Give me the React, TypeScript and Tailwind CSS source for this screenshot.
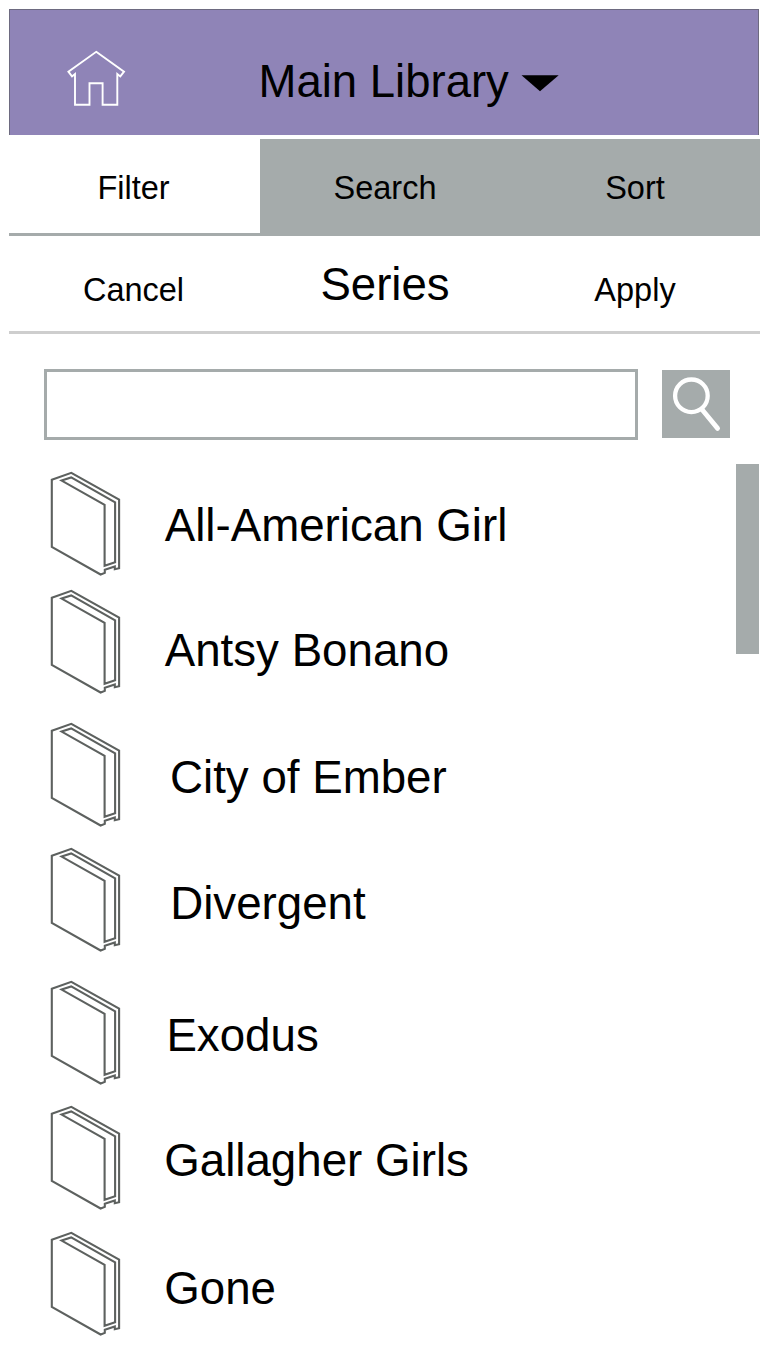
const series = [
  { name: "All-American Girl", row: "h-[118px]", label: "pt-[32px] pl-[43.7px]" },
  { name: "Antsy Bonano", row: "h-[133px]", label: "pt-[39px] pl-[43.7px]" },
  { name: "City of Ember", row: "h-[125.4px]", label: "pt-[33px] pl-[49px]" },
  { name: "Divergent", row: "h-[132.6px]", label: "pt-[33.6px] pl-[49.2px]" },
  { name: "Exodus", row: "h-[125.2px]", label: "pt-[33px] pl-[45.4px]" },
  { name: "Gallagher Girls", row: "h-[125.4px]", label: "pt-[32.8px] pl-[43.2px]" },
  { name: "Gone", row: "h-[110px]", label: "pt-[35.4px] pl-[43.2px]" },
];

function HomeIcon() {
  return (
    <svg className="h-[58px] w-[60px]" viewBox="66 49 60 58" fill="none" stroke="#fff" strokeWidth="1.9">
      <path d="M96.2 51.8 L124 71.7 L120.3 76.4 L117.3 74 V104.8 H102.6 V83.3 H89.5 V104.8 H75 V74 L72 76.4 L68.4 71.7 Z" />
    </svg>
  );
}

function BookIcon() {
  return (
    <svg className="h-[106px] w-[72px] shrink-0" viewBox="49 471 72 106" fill="none" stroke="#5d615f" strokeWidth="2.1">
      <path d="M51.8 479.7 L71.3 472.8 L119.1 499.5 V568.2 L114.8 569.2 V566.4 L104.8 569.8 V572.9 L100.6 574.5 L51.8 547 Z" />
      <path d="M61.6 480.6 L71.2 477.4 L115.1 502.3 V562.2 L104.6 565.8 V504.9 Z" />
    </svg>
  );
}

function SearchIcon() {
  return (
    <svg className="size-[68px]" viewBox="662 370 68 68" fill="none" stroke="#fff">
      <circle cx="691.4" cy="395.8" r="16.3" strokeWidth="4.3" />
      <path d="M702 409.5 L717.6 428.4" strokeWidth="4.8" strokeLinecap="round" />
    </svg>
  );
}

export default function App() {
  return (
    <main className="h-[1352px] w-[768px] overflow-hidden bg-white pt-[9px] pl-[9px] font-['Liberation_Sans',Arial,sans-serif] text-black">
      <header className="flex h-[125.6px] w-[750px] border-x border-t border-[#6d6a80] bg-[#8f84b7]">
        <button className="mt-[39px] ml-[56px] h-[58px] w-[60px]" aria-label="Home">
          <HomeIcon />
        </button>
        <button className="mt-[49px] ml-[132.5px] flex h-[46px] text-[45.5px] leading-[46px] whitespace-nowrap">
          Main Library
          <svg className="mt-[15px] ml-[12px] h-[18px] w-[38px]" viewBox="521 74 38 18">
            <path d="M521.5 75.3 H558.7 L540 91.2 Z" />
          </svg>
        </button>
      </header>

      <nav className="mt-[4.4px] grid h-[97px] w-[751px] grid-cols-[251px_250px_250px] border-b-[3px] border-[#a5abab] text-center text-[32.5px] leading-[33px]">
        <button className="pt-[6px] pr-[2px]">Filter</button>
        <button className="bg-[#a5abab] pt-[6px]">Search</button>
        <button className="bg-[#a5abab] pt-[6px]">Sort</button>
      </nav>

      <section className="grid h-[98px] w-[751px] grid-cols-[251px_250px_250px] items-start border-b-[3px] border-[#cecece] text-center text-[32.5px] leading-[33px]">
        <button className="mt-[38px] pr-[2px]">Cancel</button>
        <h1 className="mt-[26px] text-[45.6px] leading-[46px]">Series</h1>
        <button className="mt-[38px]">Apply</button>
      </section>

      <form className="mt-[35px] flex w-[751px] pl-[34.5px]">
        <input
          aria-label="Series name"
          className="h-[71px] w-[594.5px] border-[3px] border-[#a5abab] bg-white px-3 text-[33px] outline-none"
        />
        <button type="button" aria-label="Find" className="mt-[1px] ml-[24px] size-[68.4px] bg-[#a5abab]">
          <SearchIcon />
        </button>
      </form>

      <div className="mt-[24px] flex w-[750px] justify-between">
        <ul className="mt-[7px] ml-[40px]">
          {series.map((s) => (
            <li key={s.name} className={`flex items-start ${s.row}`}>
              <BookIcon />
              <span className={`text-[45.7px] leading-[46px] whitespace-nowrap ${s.label}`}>{s.name}</span>
            </li>
          ))}
        </ul>
        <div className="h-[190px] w-[23px] bg-[#a5abab]" />
      </div>
    </main>
  );
}
